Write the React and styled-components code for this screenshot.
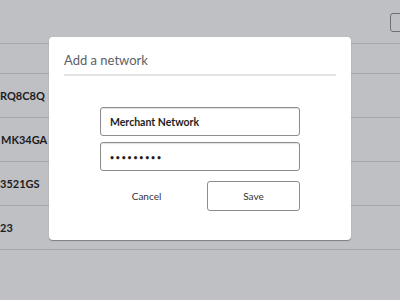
import styled, { createGlobalStyle } from 'styled-components';

const Global = createGlobalStyle`
  html, body {
    margin: 0;
    padding: 0;
    background: #bfc0c4;
    font-family: Lato, 'Open Sans', sans-serif;
  }
`;

const Page = styled.div`
  position: relative;
  width: 400px;
  height: 300px;
  overflow: hidden;
  background: #bfc0c4;
`;

const TopBar = styled.div`
  height: 43px;
  display: flex;
  align-items: flex-start;
  justify-content: flex-end;
  border-bottom: 1px solid #a8a9ad;
`;

const CheckBox = styled.div`
  width: 22px;
  height: 19px;
  margin-top: 13px;
  margin-right: -12px;
  border: 1px solid #6f7074;
  border-radius: 3px;
  box-sizing: border-box;
`;

const HeadRow = styled.div`
  height: 29px;
  border-bottom: 1px solid #a8a9ad;
`;

const Row = styled.div`
  height: 43px;
  display: flex;
  align-items: center;
  border-bottom: 1px solid #a8a9ad;
`;

const Code = styled.span`
  margin-left: ${(p) => p.$shift}px;
  font-size: 11px;
  font-weight: 700;
  color: #1c1c1e;
`;

const Dialog = styled.div`
  position: absolute;
  left: 49px;
  top: 37px;
  width: 302px;
  height: 203px;
  box-sizing: border-box;
  background: #fff;
  border-radius: 4px;
  box-shadow: 0 1px 1px rgba(0, 0, 0, 0.35);
  padding: 0 15px;
  display: flex;
  flex-direction: column;
`;

const Title = styled.h2`
  margin: 0;
  padding-top: 15px;
  height: 22px;
  font-size: 13px;
  font-weight: 400;
  color: #606064;
  border-bottom: 2px solid #e3e3e5;
`;

const Form = styled.div`
  width: 200px;
  align-self: center;
  margin-top: 31px;
  display: flex;
  flex-direction: column;
  gap: 6px;
`;

const Field = styled.div`
  height: 29px;
  box-sizing: border-box;
  border: 1px solid #8d8d90;
  border-radius: 3px;
  box-shadow: inset 0 1px 1px rgba(0, 0, 0, 0.12);
  display: flex;
  align-items: center;
  padding-left: 9px;
  font-size: ${(p) => (p.$secret ? '7px' : '10.5px')};
  font-weight: 700;
  color: #1e1e22;
  letter-spacing: ${(p) => (p.$secret ? '1.8px' : '0')};
`;

const Actions = styled.div`
  margin-top: 4px;
  display: grid;
  grid-template-columns: 1fr 1fr;
  gap: 14px;
`;

const Button = styled.button`
  height: 30px;
  box-sizing: border-box;
  font-family: Lato, 'Open Sans', sans-serif;
  font-size: 10px;
  color: #333;
  background: #fff;
  border-radius: 3px;
  border: ${(p) => (p.$outlined ? '1px solid #8d8d90' : 'none')};
  padding: 0;
`;

export default function App() {
  return (
    <Page>
      <Global />
      <TopBar>
        <CheckBox />
      </TopBar>
      <HeadRow />
      <Row>
        <Code $shift={0}>RQ8C8Q</Code>
      </Row>
      <Row>
        <Code $shift={1}>MK34GA</Code>
      </Row>
      <Row>
        <Code $shift={0}>3521GS</Code>
      </Row>
      <Row>
        <Code $shift={0}>23</Code>
      </Row>

      <Dialog>
        <Title>Add a network</Title>
        <Form>
          <Field>Merchant Network</Field>
          <Field $secret>•••••••••</Field>
          <Actions>
            <Button>Cancel</Button>
            <Button $outlined>Save</Button>
          </Actions>
        </Form>
      </Dialog>
    </Page>
  );
}
